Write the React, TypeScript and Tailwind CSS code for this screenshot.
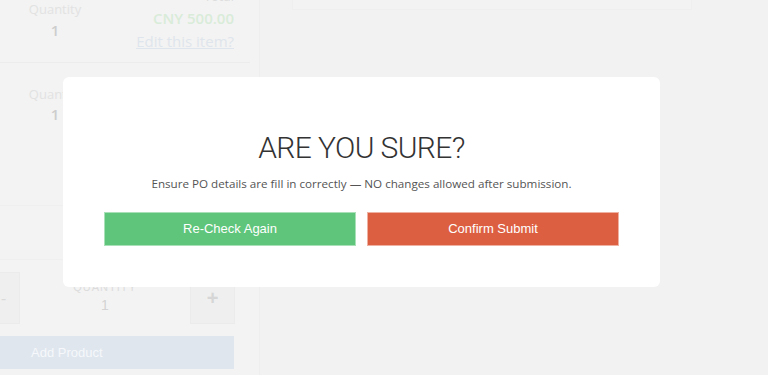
import React from "react";

export default function App() {
  return (
    <div
      className="relative w-[768px] h-[375px] overflow-hidden bg-[#f2f2f2] flex"
      style={{ fontFamily: '"Open Sans", "Liberation Sans", sans-serif' }}
    >
      {/* Sidebar */}
      <div className="w-[260px] shrink-0 border-r border-[#eeeeee] bg-[#f3f3f3] flex flex-col">
        {/* Item 1 */}
        <div className="mt-[-14px] h-[77px] w-[250px] border-b border-[#ececec] flex justify-between pr-[16px]">
          <div className="w-[110px] flex flex-col items-center pt-[14px]">
            <span className="text-[13px] leading-[18px] text-[#e2e2e2]">Quantity</span>
            <span className="text-[15px] leading-[22px] mt-[1px] text-[#cdcdcd] font-semibold">1</span>
          </div>
          <div className="flex flex-col items-end pt-[2px]">
            <span className="text-[13px] leading-[17px] text-[#dedede]">Total</span>
            <span className="text-[15px] leading-[20px] mt-[3px] font-semibold text-[#d9ecd9]">CNY 500.00</span>
            <span className="text-[15px] leading-[22px] mt-[2px] text-[#dfe5ec] underline">Edit this item?</span>
          </div>
        </div>
        {/* Item 2 */}
        <div className="h-[143px] w-[250px] border-b border-[#efefef] flex">
          <div className="w-[110px] flex flex-col items-center pt-[22px]">
            <span className="text-[13px] leading-[18px] text-[#e2e2e2]">Quantity</span>
            <span className="text-[15px] leading-[22px] text-[#cdcdcd] font-semibold">1</span>
          </div>
        </div>
        <div className="h-[54px] w-[250px] border-b border-[#efefef]" />
        {/* Quantity control */}
        <div className="mt-[12px] h-[52px] w-[235px] flex">
          <div className="w-[20px] h-full bg-[#efefef] border border-l-0 border-[#ebebeb] flex items-center justify-start pl-[1px] text-[#d9d9d9] text-[16px]">
            -
          </div>
          <div className="flex-1 flex flex-col items-center pt-[8px]" style={{ fontFamily: '"Liberation Sans", sans-serif' }}>
            <span className="text-[11px] leading-[14px] tracking-[1px] text-[#dcdcdc]">QUANTITY</span>
            <span className="text-[14px] leading-[20px] mt-[1px] text-[#d4d4d4]">1</span>
          </div>
          <div className="w-[45px] h-full bg-[#efefef] border border-[#ebebeb] flex items-center justify-center text-[#d6d6d6] text-[20px] font-bold" style={{ fontFamily: '"Liberation Sans", sans-serif' }}>
            +
          </div>
        </div>
        <div
          className="mt-[12px] h-[33px] w-[234px] bg-[#dfe6ee] flex items-center pl-[31px] text-[13px] text-[#f6f8fb]"
          style={{ fontFamily: '"Liberation Sans", sans-serif' }}
        >
          Add Product
        </div>
      </div>
      {/* Main */}
      <div className="flex-1">
        <div className="ml-[32px] mt-[-20px] w-[400px] h-[30px] bg-[#f3f3f3] border border-[#efefef]" />
      </div>

      {/* Modal */}
      <div className="absolute left-[63px] top-[77px] w-[597px] h-[210px] bg-white rounded-[6px] flex flex-col items-center">
        <h2
          className="mt-[53px] text-[30px] leading-[36px] text-[#333333] tracking-[-0.6px]"
          style={{ fontFamily: '"Helvetica Neue", Roboto, "Liberation Sans", sans-serif', fontWeight: 300 }}
        >
          ARE YOU SURE?
        </h2>
        <p className="mt-[9px] text-[11.65px] leading-[18px] text-[#545454]">
          Ensure PO details are fill in correctly — NO changes allowed after submission.
        </p>
        <div className="mt-[19px] flex gap-[11px]" style={{ fontFamily: '"Liberation Sans", sans-serif' }}>
          <button className="w-[252px] h-[34px] bg-[#5ec57a] border border-[#a9e0b7] text-white text-[13px]">
            Re-Check Again
          </button>
          <button className="w-[252px] h-[34px] bg-[#dd5f41] border border-[#efb1a2] text-white text-[13px]">
            Confirm Submit
          </button>
        </div>
      </div>
    </div>
  );
}
